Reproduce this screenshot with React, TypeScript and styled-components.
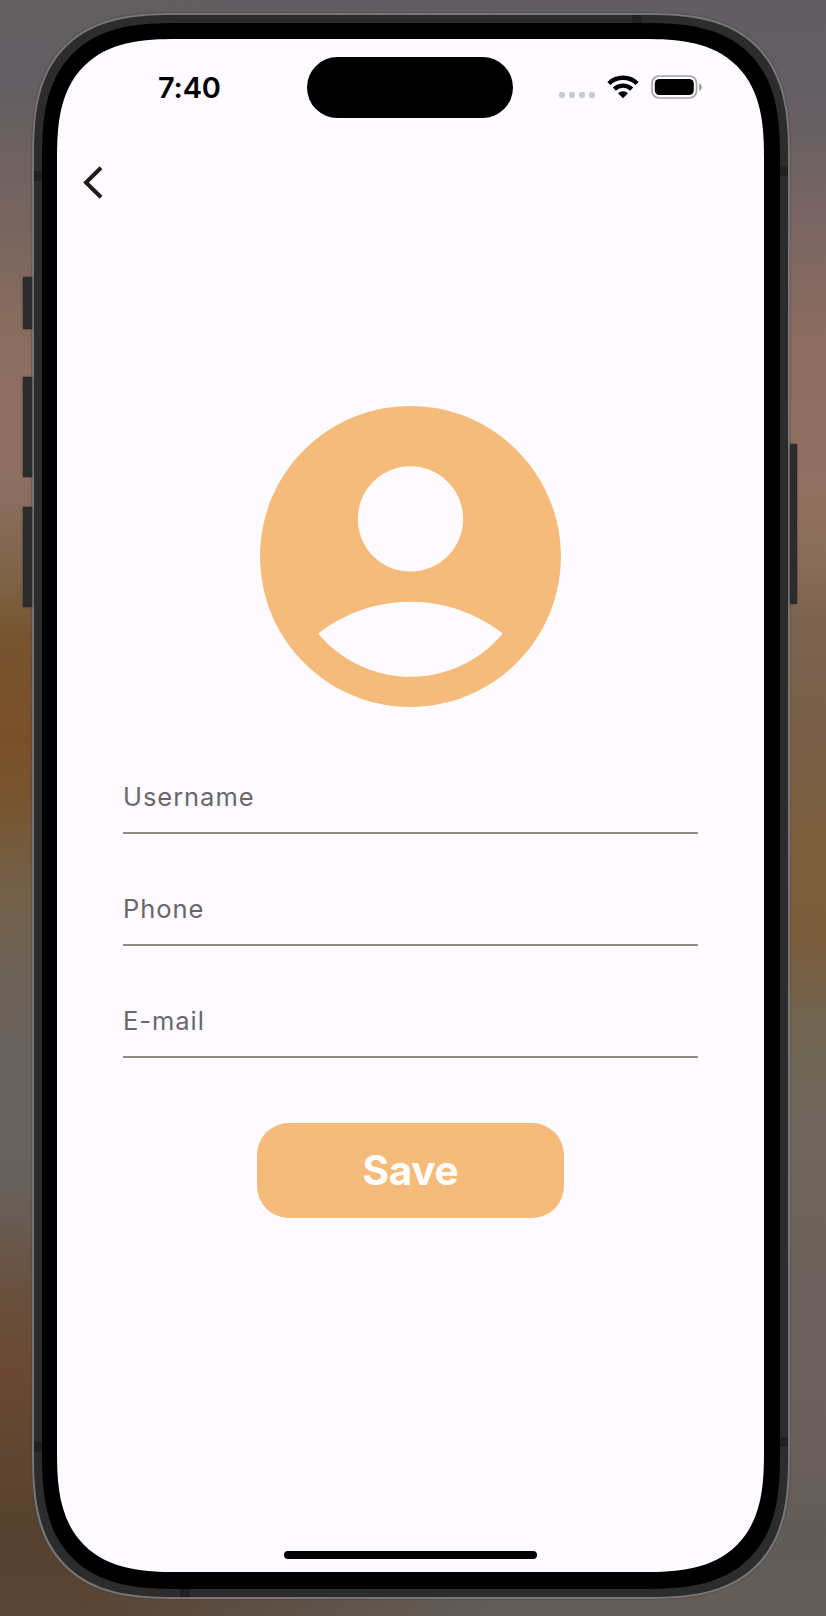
import React from "react";
import styled, { createGlobalStyle, css } from "styled-components";

const GlobalStyle = createGlobalStyle`
  *, *::before, *::after { box-sizing: border-box; }
  body { margin: 0; font-family: Inter, "Liberation Sans", sans-serif; }
`;

const leftTones = `linear-gradient(180deg,
  #625f61 0, #625e62 80px, #6a6061 130px, #79655f 230px, #8b6d5f 340px, #906f63 450px,
  #8a6d5e 500px, #7f6449 570px, #76542f 640px, #794f28 740px, #775632 810px,
  #746048 890px, #6c625a 990px, #69635f 1100px, #69605a 1190px, #69503f 1290px,
  #6b4832 1370px, #604631 1450px, #55412f 1540px, #5a4536 1616px)`;
const rightTones = `linear-gradient(180deg,
  #605d62 0, #625e65 70px, #6a6062 140px, #7a6663 220px, #8c6c5e 340px, #917062 490px,
  #8a6c59 560px, #7c6350 620px, #795f49 720px, #7d5f3d 850px, #7b5d3e 950px,
  #70644f 1020px, #6f665d 1120px, #6a615b 1270px, #6a615c 1400px, #6a5f5b 1460px,
  #615c58 1530px, #635d58 1616px)`;

const Desktop = styled.main`
  position: relative;
  isolation: isolate;
  display: flex;
  justify-content: center;
  width: 826px;
  height: 1616px;
  padding: 13px 36px 17px 32px;
  overflow: hidden;
  background: ${leftTones};

  &::before {
    content: "";
    position: absolute;
    inset: 0;
    z-index: -1;
    background: ${rightTones};
    mask-image: linear-gradient(90deg, transparent 10%, #000 60%);
  }
`;

const rounded = (simple: number, smooth: number) => css`
  border-radius: ${simple}px;
  @supports (corner-shape: superellipse(1.44)) {
    border-radius: ${smooth}px;
    corner-shape: superellipse(1.44);
  }
`;

const Chassis = styled.div`
  position: relative;
  display: flex;
  width: 758px;
  height: 1586px;
  padding: 8px;
  border: 2px solid #777576;
  background: #2c2c2c;
  box-shadow: 0 0 2px 0 #3c383a;
  ${rounded(116, 144)}
`;

const Bezel = styled.div`
  display: flex;
  flex: 1;
  padding: 16px 16px 17px 15px;
  background: #000;
  ${rounded(106, 136)}
`;

const Screen = styled.div`
  display: flex;
  flex: 1;
  flex-direction: column;
  background: #fdfbff;
  ${rounded(92, 120)}
`;

const SideButton = styled.span<{ $side: "left" | "right"; $top: number; $height: number }>`
  position: absolute;
  ${({ $side }) => $side}: ${({ $side }) => ($side === "left" ? -11 : -9)}px;
  top: ${({ $top }) => $top}px;
  width: ${({ $side }) => ($side === "left" ? 9 : 7)}px;
  height: ${({ $height }) => $height}px;
  background: #2b2b2b;
  box-shadow: 0 0 2px #2b2b2b;
`;

const AntennaBand = styled.span<{ $x: string; $y: string; $across?: boolean }>`
  position: absolute;
  ${({ $x }) => $x};
  ${({ $y }) => $y};
  width: ${({ $across }) => ($across ? 10 : 8)}px;
  height: ${({ $across }) => ($across ? 8 : 10)}px;
  background: #202020;
`;

const StatusBar = styled.header`
  display: grid;
  grid-template-columns: 250px 206px 1fr;
  height: 62px;
  margin-top: 18px;
`;

const Clock = styled.time`
  padding-left: 101px;
  font-size: 29px;
  font-weight: 600;
  line-height: 62px;
  letter-spacing: -0.15px;
  color: #000;
`;

const Island = styled.div`
  height: 61px;
  border-radius: 31px;
  background: #000;
`;

const Indicators = styled.div`
  display: flex;
  align-items: flex-start;
  padding: 17.5px 0 0 44.5px;
`;

const SignalDots = styled.div`
  display: flex;
  gap: 4px;
  margin: 17.5px 12px 0 1px;
`;

const Dot = styled.span`
  width: 6px;
  height: 6px;
  border-radius: 2px;
  background: #cccacd;
`;

const WifiIcon = styled.svg`
  width: 32px;
  height: 24px;
  margin-right: 12px;
`;

const BatteryIcon = styled.svg`
  width: 52px;
  height: 24px;
`;

const NavBar = styled.nav`
  height: 100px;
  padding: 47px 0 0 26px;
`;

const BackButton = styled.button`
  display: block;
  padding: 0;
  border: 0;
  background: none;

  svg { display: block; width: 20px; height: 33px; }
`;

const Profile = styled.form`
  display: flex;
  flex-direction: column;
  align-items: center;
  padding: 157px 66px 0;
`;

const Avatar = styled.svg`
  width: 361px;
  height: 361px;
  fill: #f5bb7b;
`;

const Fields = styled.div`
  display: grid;
  grid-auto-rows: 112px;
  width: 575px;
  margin-top: -15px;
`;

const Field = styled.label`
  display: flex;
  align-items: flex-end;
  padding-bottom: 17px;
  border-bottom: 2px solid #958c85;
  font-size: 25.5px;
  line-height: 36px;
  letter-spacing: 0.95px;
  font-weight: 400;
  color: #69676b;
`;

const SaveButton = styled.button`
  width: 307px;
  height: 95px;
  margin-top: 65px;
  padding: 0;
  border: 0;
  border-radius: 32px;
  background: #f5bb7b;
  color: #fff;
  font: 650 40.5px/95px Inter, sans-serif;
  letter-spacing: -0.3px;
`;

const HomeIndicator = styled.div`
  width: 253px;
  height: 8px;
  margin: auto auto 13px 227px;
  border-radius: 4px;
  background: #000;
`;

export default function App() {
  return (
    <>
      <GlobalStyle />
      <Desktop>
        <Chassis>
          <SideButton $side="left" $top={262} $height={52} />
          <SideButton $side="left" $top={362} $height={100} />
          <SideButton $side="left" $top={492} $height={100} />
          <SideButton $side="right" $top={429} $height={160} />
          <AntennaBand $x="left: 0" $y="top: 156px" />
          <AntennaBand $x="right: 0" $y="top: 151px" />
          <AntennaBand $x="left: 0" $y="top: 1427px" />
          <AntennaBand $x="right: 0" $y="top: 1422px" />
          <AntennaBand $x="left: 598px" $y="top: 0" $across />
          <AntennaBand $x="left: 146px" $y="bottom: 0" $across />
          <Bezel>
            <Screen>
              <StatusBar>
                <Clock>7:40</Clock>
                <Island />
                <Indicators>
                  <SignalDots>
                    <Dot />
                    <Dot />
                    <Dot />
                    <Dot />
                  </SignalDots>
                  <WifiIcon viewBox="0 0 32 24" aria-label="Wi-Fi">
                    <g fill="none" stroke="#000" strokeWidth="4.4">
                      <path d="M1.9 8.5a20.3 20.3 0 0 1 28.2 0" />
                      <path d="M7.3 14.1a12.6 12.6 0 0 1 17.4 0" />
                    </g>
                    <path d="M16 23.2l-5-5a7.3 7.3 0 0 1 10 0z" />
                  </WifiIcon>
                  <BatteryIcon viewBox="0 0 52 24" aria-label="Battery">
                    <rect x="1" y="1" width="44.5" height="22" rx="7" fill="none" stroke="#a5a3a7" strokeWidth="1.7" />
                    <rect x="3.8" y="4" width="39" height="16" rx="4.5" />
                    <path d="M48.3 8.2v7.6c3-1.4 3-6.2 0-7.6z" fill="#8e8c90" />
                  </BatteryIcon>
                </Indicators>
              </StatusBar>
              <NavBar>
                <BackButton type="button" aria-label="Back">
                  <svg viewBox="0 0 20 33">
                    <path d="M18 1.8L3 16.5 18 31.2" fill="none" stroke="#1f1b16" strokeWidth="4" />
                  </svg>
                </BackButton>
              </NavBar>
              <Profile>
                <Avatar viewBox="0 0 24 24" aria-hidden="true">
                  <path d="M12 2C6.48 2 2 6.48 2 12s4.48 10 10 10 10-4.48 10-10S17.52 2 12 2zm0 4c1.93 0 3.5 1.57 3.5 3.5S13.93 13 12 13s-3.5-1.57-3.5-3.5S10.07 6 12 6zm0 14c-2.03 0-4.43-.82-6.14-2.88C7.55 15.8 9.68 15 12 15s4.45.8 6.14 2.12C16.43 19.18 14.03 20 12 20z" />
                </Avatar>
                <Fields>
                  <Field>Username</Field>
                  <Field>Phone</Field>
                  <Field>E-mail</Field>
                </Fields>
                <SaveButton type="button">Save</SaveButton>
              </Profile>
              <HomeIndicator />
            </Screen>
          </Bezel>
        </Chassis>
      </Desktop>
    </>
  );
}
